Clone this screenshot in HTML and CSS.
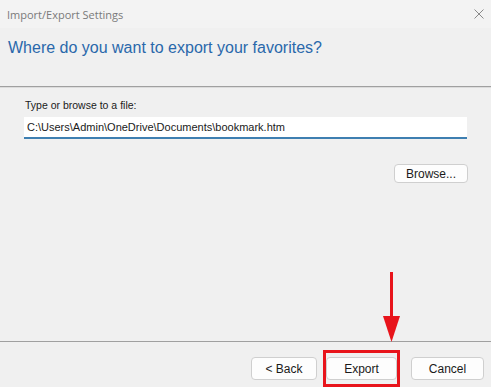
FILE: index.html
```html
<!DOCTYPE html>
<html lang="en">
<head>
  <meta charset="UTF-8">
  <title>Import/Export Settings</title>
  <link rel="stylesheet" href="styles.css">
</head>
<body>
  <div class="dialog">
    <div class="titlebar">
      <span class="title">Import/Export Settings</span>
      <svg class="close" width="10" height="10" viewBox="0 0 10 10">
        <path d="M0.5 0.5 L9.5 9.5 M9.5 0.5 L0.5 9.5" stroke="#8a8a8a" stroke-width="1" fill="none"/>
      </svg>
    </div>

    <div class="header">
      <h1>Where do you want to export your favorites?</h1>
    </div>

    <div class="content">
      <label for="file">Type or browse to a file:</label>
      <input type="text" id="file" value="C:\Users\Admin\OneDrive\Documents\bookmark.htm">
      <div class="browse-row">
        <button class="btn browse">Browse...</button>
      </div>
    </div>

    <div class="footer">
      <button class="btn">&lt; Back</button>
      <span class="highlight"><button class="btn export">Export</button></span>
      <button class="btn cancel">Cancel</button>
    </div>

    <svg class="arrow" width="17" height="70" viewBox="0 0 17 70">
      <rect x="7" y="0" width="3" height="46" fill="#e8141b"/>
      <path d="M0 44 L17 44 L8.5 70 Z" fill="#e8141b"/>
    </svg>
  </div>
</body>
</html>
```

FILE: styles.css
```css
body {
  margin: 0;
  background: #f0f0f0;
  font-family: "Liberation Sans", Arial, sans-serif;
}
.dialog {
  position: relative;
  width: 491px;
  height: 387px;
  overflow: hidden;
}
.titlebar {
  height: 28px;
  background: #f3f3f3;
  display: flex;
  align-items: center;
  justify-content: space-between;
  padding: 0 7px;
}
.title {
  font-family: "Open Sans", sans-serif;
  font-size: 11px;
  color: #7a7a7a;
}
.header {
  height: 58px;
  border-bottom: 1px solid #a0a0a0;
  box-shadow: 0 1px 0 #dcdcdc;
}
h1 {
  margin: 0;
  padding: 11px 0 0 8px;
  font-size: 16px;
  font-weight: normal;
  color: #2a68ab;
}
.content {
  height: 242px;
  padding: 12px 25px 0 24px;
  border-bottom: 1px solid #a0a0a0;
  font-size: 10.5px;
  color: #1a1a1a;
}
label {
  display: block;
  margin-left: 1px;
}
input {
  display: block;
  box-sizing: border-box;
  width: 443px;
  height: 22px;
  margin-top: 6px;
  padding: 0 3px;
  border: none;
  border-bottom: 2px solid #3e7fb1;
  background: #fff;
  font-family: "Liberation Sans", Arial, sans-serif;
  font-size: 11px;
  color: #1a1a1a;
  outline: none;
}
.browse-row {
  display: flex;
  justify-content: flex-end;
  margin-top: 25px;
}
.btn {
  box-sizing: border-box;
  height: 23px;
  padding: 0;
  border: 1px solid #cfcfcf;
  border-radius: 4px;
  background: #fdfdfd;
  font-family: "Liberation Sans", Arial, sans-serif;
  font-size: 12px;
  color: #1a1a1a;
}
.browse {
  width: 74px;
  height: 19px;
  margin-right: -2px;
}
.footer {
  display: flex;
  align-items: flex-start;
  height: 45px;
  box-sizing: border-box;
  padding: 15px 0 0 251px;
}
.footer .btn {
  width: 66px;
}
.highlight {
  display: flex;
  margin-left: 6px;
  margin-top: -7px;
  padding: 4px 0;
  border: 3px solid #e8141b;
}
.footer .export {
  width: 71px;
}
.footer .cancel {
  width: 73px;
  margin-left: 11px;
}
.arrow {
  position: absolute;
  left: 383px;
  top: 272px;
}
```
